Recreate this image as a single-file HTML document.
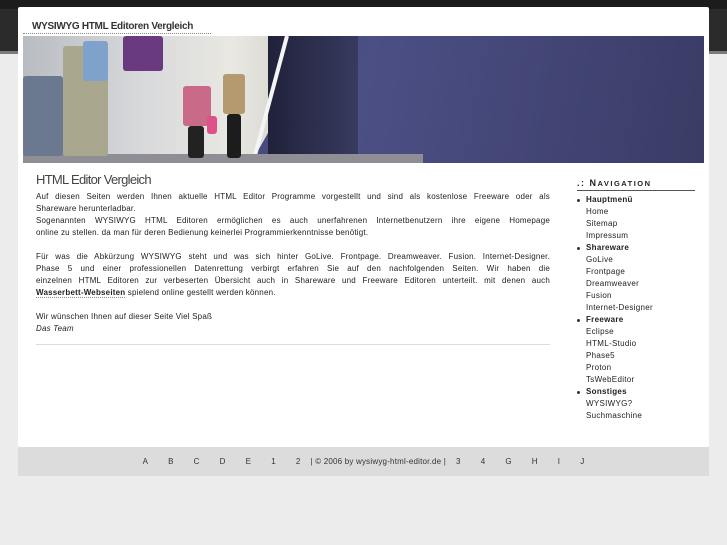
<!DOCTYPE html>
<html><head><meta charset="utf-8"><style>
*{margin:0;padding:0;box-sizing:border-box}
body{width:727px;height:545px;background:#ececec;font-family:"Liberation Sans",sans-serif;position:relative;overflow:hidden;color:#222}
.top{position:absolute;left:0;top:0;width:727px;height:51px;background:linear-gradient(#1c1c1c 0,#1c1c1c 9px,#2b2b2b 9px,#2b2b2b 100%)}
.topl{position:absolute;left:0;top:51px;width:727px;height:3px;background:#7a7a7a}
.box{position:absolute;left:18px;top:7px;width:691px;height:440px;background:#fff;border-radius:2px}
.title{position:absolute;left:32px;top:21px;font-size:10px;font-weight:bold;color:#333;letter-spacing:-0.3px}
.tline{position:absolute;left:23px;top:33px;width:188px;border-top:1px dotted #888}
.ban{position:absolute;left:23px;top:36px;width:681px;height:127px;overflow:hidden;background:linear-gradient(100deg,#3a3e6a 0%,#4b4f84 50%,#3a3c66 100%)}
.ban .l{position:absolute;left:0;top:0;width:300px;height:127px;background:linear-gradient(90deg,#b8bcc2 0%,#d8d9db 40%,#e9e8e2 70%,#c9c7bf 100%);clip-path:polygon(0 0,100% 0,76% 100%,0 100%)}
.ban .d{position:absolute;left:245px;top:0;width:90px;height:127px;background:linear-gradient(90deg,#20223a,#383a60)}
.ban .w{position:absolute;left:262px;top:0;width:4px;height:130px;background:#f4f4f4;transform:rotate(15deg);transform-origin:top}
.ban .f{position:absolute;left:0;top:118px;width:400px;height:9px;background:#8e8e94}
.p{position:absolute;border-radius:3px}
.main{position:absolute;left:36px;top:172px;width:514px;font-size:8px;line-height:12px;color:#222;letter-spacing:0.2px}
.main h1{font-size:13px;font-weight:normal;color:#444;letter-spacing:-0.7px;margin-bottom:4px;line-height:15px}
.j{text-align:justify;text-align-last:justify;white-space:nowrap}
.j,.n{height:12px}
.hr{position:absolute;left:36px;top:344px;width:514px;border-top:1px solid #ddd}
.nav{position:absolute;left:577px;top:177px;width:118px;font-size:8px;line-height:12px;letter-spacing:0.3px}
.nav h2{font-size:9px;letter-spacing:1.5px;color:#222;border-bottom:1px solid #555;padding-bottom:0;line-height:12px;margin-bottom:3px;width:118px}
.nav .b{font-weight:bold;padding-left:9px;position:relative}
.nav .b:before{content:"";position:absolute;left:0;top:5px;width:3px;height:3px;border-radius:50%;background:#333}
.nav .i{padding-left:9px}
.foot{position:absolute;left:18px;top:447px;width:691px;height:29px;background:#dcdcdc;font-size:8px;color:#333;text-align:center;line-height:29px;letter-spacing:0.2px}
.foot span{margin:0 10px}
</style></head><body>
<div class="top"></div><div class="topl"></div>
<div class="box"></div>
<div class="title">WYSIWYG HTML Editoren Vergleich</div>
<div class="tline"></div>
<div class="ban">
<div class="l"></div><div class="d"></div><div class="w"></div><div class="f"></div>
<div class="p" style="left:0;top:40px;width:40px;height:80px;background:#6a7890"></div>
<div class="p" style="left:40px;top:10px;width:45px;height:110px;background:#a9a88e"></div>
<div class="p" style="left:60px;top:5px;width:25px;height:40px;background:#7ea2cc"></div>
<div class="p" style="left:100px;top:0;width:40px;height:35px;background:#6a3a80"></div>
<div class="p" style="left:160px;top:50px;width:28px;height:40px;background:#c86a88"></div>
<div class="p" style="left:165px;top:90px;width:16px;height:32px;background:#222"></div>
<div class="p" style="left:200px;top:38px;width:22px;height:40px;background:#b49a6e"></div>
<div class="p" style="left:204px;top:78px;width:14px;height:44px;background:#1c1c1c"></div>
<div class="p" style="left:184px;top:80px;width:10px;height:18px;background:#e0508a"></div>
</div>
<div class="main">
<h1>HTML Editor Vergleich</h1>
<div class="j">Auf diesen Seiten werden Ihnen aktuelle HTML Editor Programme vorgestellt und sind als kostenlose Freeware oder als</div>
<div class="n">Shareware herunterladbar.</div>
<div class="j">Sogenannten WYSIWYG HTML Editoren ermöglichen es auch unerfahrenen Internetbenutzern ihre eigene Homepage</div>
<div class="n">online zu stellen. da man für deren Bedienung keinerlei Programmierkenntnisse benötigt.</div>
<div class="n"></div>
<div class="j">Für was die Abkürzung WYSIWYG steht und was sich hinter GoLive. Frontpage. Dreamweaver. Fusion. Internet-Designer.</div>
<div class="j">Phase 5 und einer professionellen Datenrettung verbirgt erfahren Sie auf den nachfolgenden Seiten. Wir haben die</div>
<div class="j">einzelnen HTML Editoren zur verbeserten Übersicht auch in Shareware und Freeware Editoren unterteilt. mit denen auch</div>
<div class="n"><b style="border-bottom:1px dotted #888">Wasserbett-Webseiten</b> spielend online gestellt werden können.</div>
<div class="n"></div>
<div class="n">Wir wünschen Ihnen auf dieser Seite Viel Spaß</div>
<div class="n"><i>Das Team</i></div>
</div>
<div class="hr"></div>
<div class="nav">
<h2>.: N<span style="font-size:7.5px">AVIGATION</span></h2>
<div class="b">Hauptmenü</div><div class="i">Home</div><div class="i">Sitemap</div><div class="i">Impressum</div>
<div class="b">Shareware</div><div class="i">GoLive</div><div class="i">Frontpage</div><div class="i">Dreamweaver</div><div class="i">Fusion</div><div class="i">Internet-Designer</div>
<div class="b">Freeware</div><div class="i">Eclipse</div><div class="i">HTML-Studio</div><div class="i">Phase5</div><div class="i">Proton</div><div class="i">TsWebEditor</div>
<div class="b">Sonstiges</div><div class="i">WYSIWYG?</div><div class="i">Suchmaschine</div>
</div>
<div class="foot"><span>A</span><span>B</span><span>C</span><span>D</span><span>E</span><span>1</span><span>2</span>| © 2006 by wysiwyg-html-editor.de |<span>3</span><span>4</span><span>G</span><span>H</span><span>I</span><span>J</span></div>
</body></html>
